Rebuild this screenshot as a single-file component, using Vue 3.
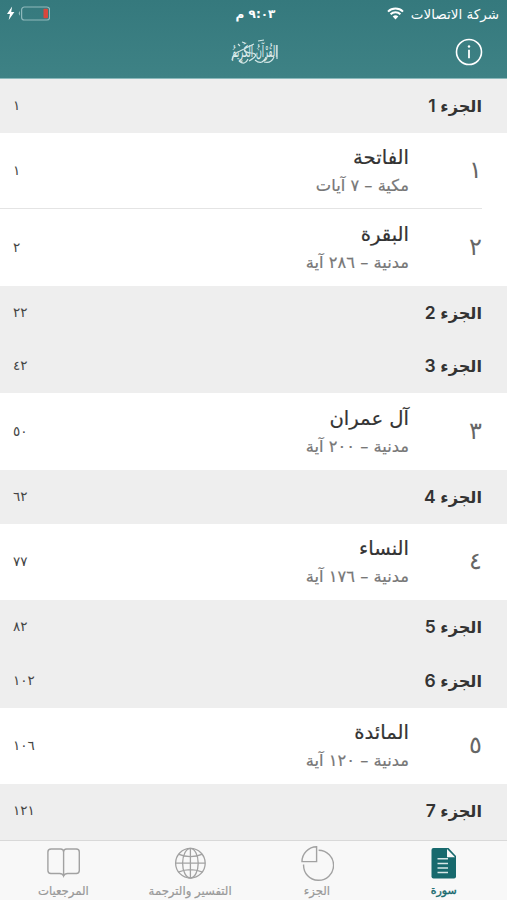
<template>
  <div class="app" dir="rtl">
    <header class="header">
      <div class="status">
        <div class="status__carrier">
          <span>شركة الاتصالات</span>
          <svg class="status__wifi" width="17" height="13" viewBox="0 0 17 13">
            <path d="M1 4.6a10.8 10.8 0 0 1 15 0M3.6 7.3a7 7 0 0 1 9.8 0" fill="none" stroke="#fff" stroke-width="2" />
            <path d="M8.5 12.4 5.7 9.5a4 4 0 0 1 5.6 0z" fill="#fff" />
          </svg>
        </div>
        <div class="status__time">٩:٠٣ م</div>
        <div class="status__battery">
          <svg width="43" height="15" viewBox="0 0 43 15">
            <path d="M5.1.6 0 8h3L1.7 14 7.4 6.1H4.2z" fill="#fff" />
            <path d="M13 5q-2.6 2.4 0 4.8z" fill="#8fb9bc" />
            <rect x="14.6" y="1" width="28" height="13" rx="2.8" fill="none" stroke="#8fb9bc" stroke-width="1.2" />
            <rect x="36.5" y="2.7" width="4.5" height="9.6" rx=".8" fill="#d8473c" />
          </svg>
        </div>
      </div>
      <div class="bar">
        <svg class="bar__info" width="28" height="28" viewBox="0 0 28 28" fill="none" stroke="#fff">
          <circle cx="14" cy="14" r="12.5" stroke-width="1.6" />
          <path d="M14 11.7v8.6" stroke-width="1.8" />
          <circle cx="14" cy="8.5" r="1.2" fill="#fff" stroke="none" />
        </svg>
        <svg class="bar__logo" width="60" height="40" viewBox="0 0 60 40">
          <g transform="translate(30.5 24.5) scale(.59 1.15)">
            <text text-anchor="middle">القُرْآنُ الكَرِيمُ</text>
          </g>
          <path d="M8 28q2-7 8-9l14-7M14 12l2 2M18 10l3 1M15 29q6 5 9-2M31 28q7 6 11-3M22 15q-5 5 5 6t-2 8M40 30q7 2 10-5M34 9l6-1M53 13v14" />
        </svg>
        <span class="bar__spacer"></span>
      </div>
    </header>

    <main class="list">
      <template v-for="(row, i) in rows" :key="i">
        <div v-if="row.juz" class="juz">
          <b class="juz__title">الجزء <span class="juz__number">{{ row.juz }}</span></b>
          <span class="page">{{ row.page }}</span>
        </div>
        <div v-else class="surah" :class="{ 'surah--line': row.line }">
          <span class="surah__number">{{ row.number }}</span>
          <div class="surah__body">
            <p class="surah__name">{{ row.name }}</p>
            <p class="surah__info">{{ row.info }}</p>
          </div>
          <span class="page">{{ row.page }}</span>
        </div>
      </template>
    </main>

    <nav class="tabs">
      <div class="tab tab--active">
        <svg width="34" height="36" viewBox="0 0 34 36">
          <path d="M6.5 2h15l7.5 8v20.5a2 2 0 0 1-2 2H6.5a2 2 0 0 1-2-2V4a2 2 0 0 1 2-2z" fill="#17696d" />
          <path d="M20 3v8.3h8z" fill="#f8f8f8" />
          <path d="M10.5 12.7h10.5M10.5 17.5h10.5M10.5 22h10.5M10.5 26.5h10.5" stroke="#d5e6e6" stroke-width="1.4" />
        </svg>
        <span>سورة</span>
      </div>
      <div class="tab">
        <svg width="34" height="36" viewBox="0 0 34 36" fill="none" stroke="#a2a2a2" stroke-width="1.4">
          <path d="M16.6.8v14.8H2A14.8 14.8 0 0 1 16.6.8z" />
          <path d="M18.6 4.3A15 15 0 1 1 3.6 18.5" />
        </svg>
        <span>الجزء</span>
      </div>
      <div class="tab">
        <svg width="34" height="36" viewBox="0 0 34 36" fill="none" stroke="#a2a2a2" stroke-width="1.3">
          <circle cx="17.4" cy="17.2" r="14.8" />
          <ellipse cx="17.4" cy="17.2" rx="7.8" ry="14.8" />
          <path d="M17.4 2.4v29.6M2.6 17.2h29.6M5.2 8.2q12.2 5 24.4 0M5.2 26.2q12.2-5 24.4 0" />
        </svg>
        <span>التفسير والترجمة</span>
      </div>
      <div class="tab">
        <svg width="34" height="36" viewBox="0 0 34 36" fill="none" stroke="#a2a2a2" stroke-width="1.4">
          <path d="M17.6 6q0-3-3-3H5.1Q1.9 3 1.9 6v18.5q0 3 3 3h8.7q3 0 4 2.5 1-2.5 4-2.5h8.7q3 0 3-3V6q0-3-3-3h-9.7q-3 0-3 3v23" />
        </svg>
        <span>المرجعيات</span>
      </div>
    </nav>
  </div>
</template>

<script setup>
const rows = [
  { juz: 1, page: '١' },
  { number: '١', name: 'الفاتحة', info: 'مكية – ٧ آيات', page: '١', line: true },
  { number: '٢', name: 'البقرة', info: 'مدنية – ٢٨٦ آية', page: '٢' },
  { juz: 2, page: '٢٢' },
  { juz: 3, page: '٤٢' },
  { number: '٣', name: 'آل عمران', info: 'مدنية – ٢٠٠ آية', page: '٥٠' },
  { juz: 4, page: '٦٢' },
  { number: '٤', name: 'النساء', info: 'مدنية – ١٧٦ آية', page: '٧٧' },
  { juz: 5, page: '٨٢' },
  { juz: 6, page: '١٠٢' },
  { number: '٥', name: 'المائدة', info: 'مدنية – ١٢٠ آية', page: '١٠٦' },
  { juz: 7, page: '١٢١' },
]
</script>

<style>
body {
  background: #fff;
}
</style>

<style scoped>
.app {
  display: flex;
  flex-direction: column;
  width: 507px;
  height: 900px;
  overflow: hidden;
  font-family: 'DejaVu Sans', sans-serif;
  color: #333;
}
.header {
  flex: none;
  height: 79px;
  box-sizing: border-box;
  background: linear-gradient(#35797d, #3e8285);
  border-bottom: 1px solid #8bb9bb;
  color: #fff;
}
.status {
  display: grid;
  grid-template-columns: 1fr 60px 1fr;
  align-items: center;
  height: 27px;
  padding: 0 8px 0 7px;
  font-size: 12px;
}
.status__carrier {
  display: flex;
  align-items: center;
  gap: 7px;
  font-size: 13.5px;
}
.status__time {
  padding-left: 5px;
  text-align: center;
  font-weight: bold;
  white-space: nowrap;
}
.status__battery {
  display: flex;
  justify-content: flex-end;
}
.bar {
  display: grid;
  grid-template-columns: 1fr 60px 1fr;
  align-items: center;
  height: 50px;
  padding: 0 24px 0 25px;
}
.bar__logo text {
  font-size: 14px;
  fill: #e3f1f1;
}
.bar__logo path {
  fill: none;
  stroke: #d3e7e7;
  stroke-width: 1.2;
}
.list {
  flex: none;
  height: 761px;
  overflow: hidden;
  background: #eee;
}
.juz {
  display: flex;
  align-items: center;
  justify-content: space-between;
  height: 53.7px;
  padding: 0 25px 0 13px;
  background: #eee;
}
.juz__title {
  padding-bottom: 1px;
  font-size: 16.2px;
  word-spacing: -1px;
}
.juz__number {
  font-family: Inter, sans-serif;
  font-size: 17.5px;
  font-weight: 600;
}
.page {
  padding-bottom: 2px;
  font-size: 13.5px;
  color: #444;
}
.surah {
  display: flex;
  align-items: center;
  height: 76.6px;
  padding: 0 25px 0 13px;
  background: #fff;
}
.surah--line {
  background: linear-gradient(#e4e4e4, #e4e4e4) 0 100% / 482px 1px no-repeat #fff;
}
.surah__number {
  width: 73px;
  padding-bottom: 1px;
  font-size: 24px;
  font-weight: 200;
  color: #666;
}
.surah__body {
  flex: 1;
}
.surah__name,
.surah__info {
  margin: 0;
}
.surah__name {
  padding-top: 1px;
  font-size: 19.6px;
  line-height: 29px;
  -webkit-text-stroke: 0.2px #333;
}
.surah__info {
  font-size: 16.3px;
  line-height: 27px;
  color: #777;
  -webkit-text-stroke: 0.2px #777;
}
.tabs {
  display: grid;
  grid-template-columns: repeat(4, 1fr);
  flex: none;
  height: 60px;
  box-sizing: border-box;
  border-top: 1px solid #d9d9d9;
  background: #f8f8f8;
}
.tab {
  display: flex;
  flex-direction: column;
  align-items: center;
  padding-top: 5px;
  font-size: 11.7px;
  line-height: 18px;
  color: #999;
  -webkit-text-stroke: 0.2px #999;
}
.tab svg {
  flex: none;
}
.tab--active {
  font-size: 11px;
  color: #17696d;
  -webkit-text-stroke: 0.4px #17696d;
}
</style>
